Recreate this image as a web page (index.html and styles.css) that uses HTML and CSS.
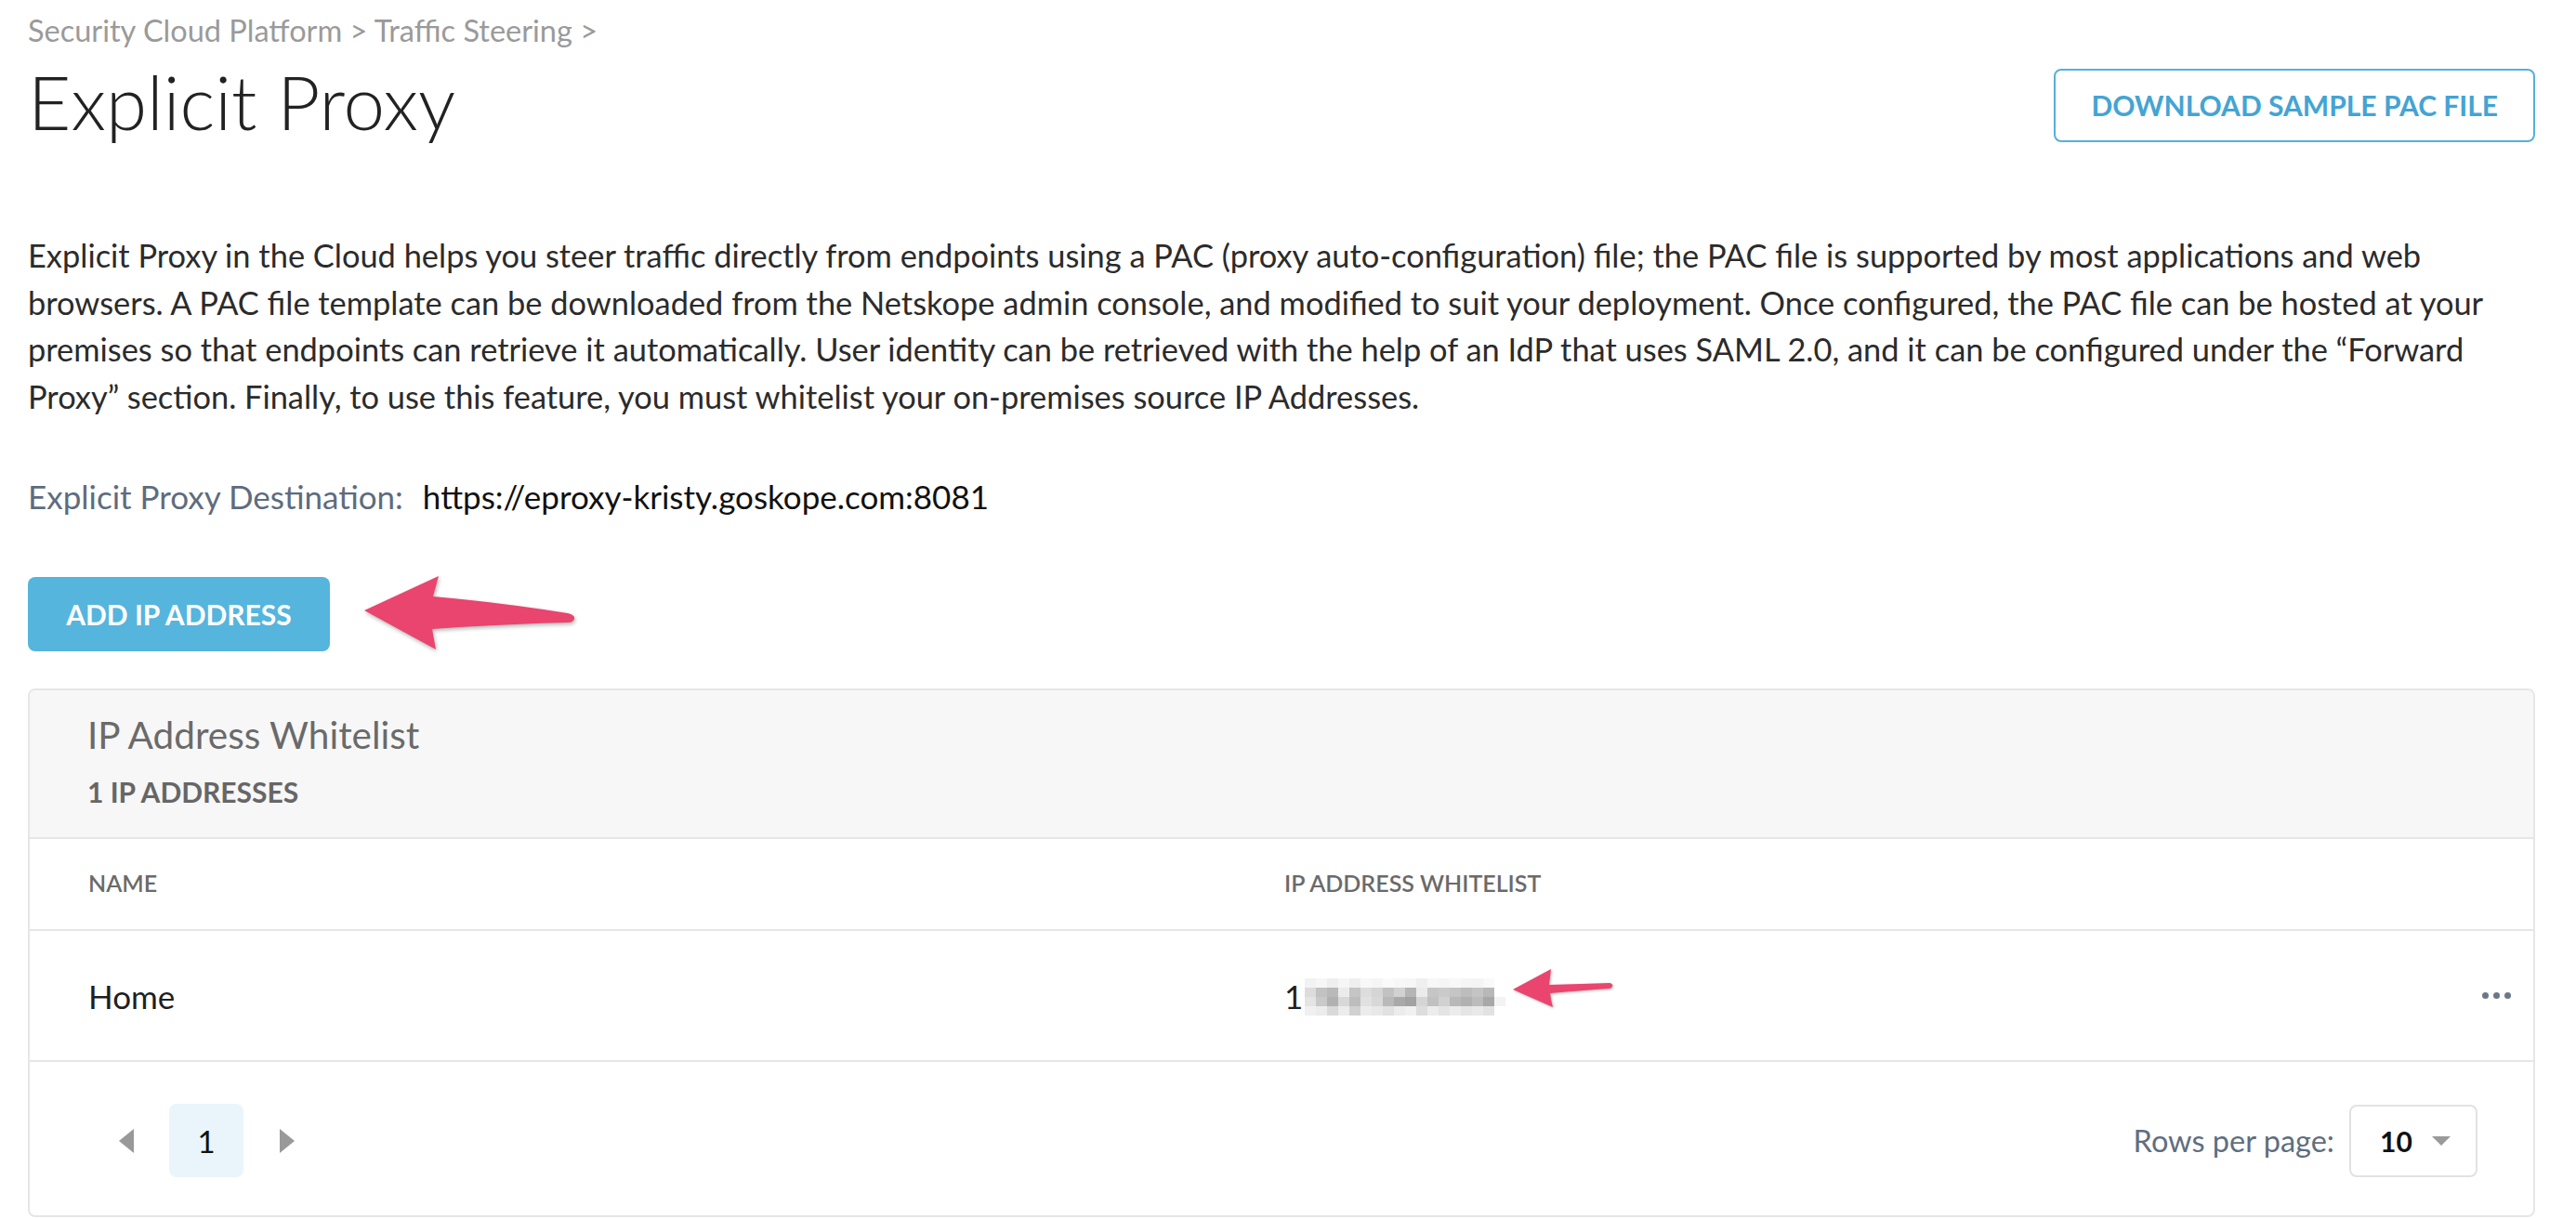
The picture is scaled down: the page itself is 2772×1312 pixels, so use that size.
FILE: index.html
```html
<!DOCTYPE html>
<html lang="en">
<head>
<meta charset="utf-8">
<title>Explicit Proxy</title>
<link rel="stylesheet" href="styles.css">
</head>
<body>
<div class="page">
  <div class="crumbs">Security Cloud Platform &gt; Traffic Steering &gt;</div>
  <div class="title-row">
    <h1>Explicit Proxy</h1>
    <button class="btn-outline">DOWNLOAD SAMPLE PAC FILE</button>
  </div>

  <p class="intro">Explicit Proxy in the Cloud helps you steer traffic directly from endpoints using a PAC (proxy auto-configuration) file; the PAC file is supported by most applications and web browsers. A PAC file template can be downloaded from the Netskope admin console, and modified to suit your deployment. Once configured, the PAC file can be hosted at your premises so that endpoints can retrieve it automatically. User identity can be retrieved with the help of an IdP that uses SAML 2.0, and it can be configured under the “Forward Proxy” section. Finally, to use this feature, you must whitelist your on-premises source IP Addresses.</p>

  <div class="dest">
    <span class="dest-label">Explicit Proxy Destination:</span>
    <span class="dest-value">https://eproxy-kristy.goskope.com:8081</span>
  </div>

  <div class="actions">
    <button class="btn-primary">ADD IP ADDRESS</button>
    <svg class="arrow-big" width="240" height="90" viewBox="0 0 240 90">
      <path d="M7 42 L87 5 Q84 16 81 27 Q150 33 226 45 Q234 47 233 51 Q232 55 226 55 Q150 57 80 62 Q82 73 84 84 Z" fill="#e9456e"/>
    </svg>
  </div>

  <div class="card">
    <div class="card-head">
      <div class="card-title">IP Address Whitelist</div>
      <div class="card-count">1 IP ADDRESSES</div>
    </div>

    <div class="row row-head">
      <div class="cell">NAME</div>
      <div class="cell">IP ADDRESS WHITELIST</div>
      <div class="cell"></div>
    </div>

    <div class="row row-data">
      <div class="cell">Home</div>
      <div class="cell ip">
        <span>1</span>
        <svg class="blur" width="216" height="40" viewBox="0 0 216 40">
          <g>
            <rect x="0" y="0" width="12" height="10" fill="#f2f2f2"/><rect x="12" y="0" width="12" height="10" fill="#f6f6f6"/><rect x="24" y="0" width="12" height="10" fill="#eeeeee"/><rect x="36" y="0" width="12" height="10" fill="#f6f6f6"/><rect x="48" y="0" width="12" height="10" fill="#efefef"/><rect x="60" y="0" width="12" height="10" fill="#f8f8f8"/><rect x="72" y="0" width="12" height="10" fill="#f5f5f5"/><rect x="84" y="0" width="12" height="10" fill="#fafafa"/><rect x="96" y="0" width="12" height="10" fill="#f7f7f7"/><rect x="108" y="0" width="12" height="10" fill="#f6f6f6"/><rect x="120" y="0" width="12" height="10" fill="#efefef"/><rect x="132" y="0" width="12" height="10" fill="#f7f7f7"/><rect x="144" y="0" width="12" height="10" fill="#f5f5f5"/><rect x="156" y="0" width="12" height="10" fill="#f8f8f8"/><rect x="168" y="0" width="12" height="10" fill="#f5f5f5"/><rect x="180" y="0" width="12" height="10" fill="#f4f4f4"/><rect x="192" y="0" width="12" height="10" fill="#f9f9f9"/>
            <rect x="0" y="10" width="12" height="10" fill="#dcdcdc"/><rect x="12" y="10" width="12" height="10" fill="#c2c2c2"/><rect x="24" y="10" width="12" height="10" fill="#b9b9b9"/><rect x="36" y="10" width="12" height="10" fill="#ebebeb"/><rect x="48" y="10" width="12" height="10" fill="#c5c5c5"/><rect x="60" y="10" width="12" height="10" fill="#dddddd"/><rect x="72" y="10" width="12" height="10" fill="#d5d5d5"/><rect x="84" y="10" width="12" height="10" fill="#c2c2c2"/><rect x="96" y="10" width="12" height="10" fill="#d2d2d2"/><rect x="108" y="10" width="12" height="10" fill="#b5b5b5"/><rect x="120" y="10" width="12" height="10" fill="#ebebeb"/><rect x="132" y="10" width="12" height="10" fill="#c6c6c6"/><rect x="144" y="10" width="12" height="10" fill="#cacaca"/><rect x="156" y="10" width="12" height="10" fill="#c5c5c5"/><rect x="168" y="10" width="12" height="10" fill="#bdbdbd"/><rect x="180" y="10" width="12" height="10" fill="#c4c4c4"/><rect x="192" y="10" width="12" height="10" fill="#b8b8b8"/>
            <rect x="0" y="20" width="12" height="10" fill="#e4e4e4"/><rect x="12" y="20" width="12" height="10" fill="#c9c9c9"/><rect x="24" y="20" width="12" height="10" fill="#b1b1b1"/><rect x="36" y="20" width="12" height="10" fill="#d8d8d8"/><rect x="48" y="20" width="12" height="10" fill="#bdbdbd"/><rect x="60" y="20" width="12" height="10" fill="#e1e1e1"/><rect x="72" y="20" width="12" height="10" fill="#d8d8d8"/><rect x="84" y="20" width="12" height="10" fill="#b9b9b9"/><rect x="96" y="20" width="12" height="10" fill="#a9a9a9"/><rect x="108" y="20" width="12" height="10" fill="#a2a2a2"/><rect x="120" y="20" width="12" height="10" fill="#d5d5d5"/><rect x="132" y="20" width="12" height="10" fill="#c1c1c1"/><rect x="144" y="20" width="12" height="10" fill="#d1d1d1"/><rect x="156" y="20" width="12" height="10" fill="#b9b9b9"/><rect x="168" y="20" width="12" height="10" fill="#b1b1b1"/><rect x="180" y="20" width="12" height="10" fill="#bcbcbc"/><rect x="192" y="20" width="12" height="10" fill="#a8a8a8"/><rect x="204" y="20" width="12" height="10" fill="#f3f3f3"/>
            <rect x="0" y="30" width="12" height="10" fill="#f0f0f0"/><rect x="12" y="30" width="12" height="10" fill="#ececec"/><rect x="24" y="30" width="12" height="10" fill="#d9d9d9"/><rect x="36" y="30" width="12" height="10" fill="#ececec"/><rect x="48" y="30" width="12" height="10" fill="#d1d1d1"/><rect x="60" y="30" width="12" height="10" fill="#ececec"/><rect x="72" y="30" width="12" height="10" fill="#e8e8e8"/><rect x="84" y="30" width="12" height="10" fill="#e1e1e1"/><rect x="96" y="30" width="12" height="10" fill="#ececec"/><rect x="108" y="30" width="12" height="10" fill="#f1f1f1"/><rect x="120" y="30" width="12" height="10" fill="#dddddd"/><rect x="132" y="30" width="12" height="10" fill="#ececec"/><rect x="144" y="30" width="12" height="10" fill="#e4e4e4"/><rect x="156" y="30" width="12" height="10" fill="#ececec"/><rect x="168" y="30" width="12" height="10" fill="#e5e5e5"/><rect x="180" y="30" width="12" height="10" fill="#e9e9e9"/><rect x="192" y="30" width="12" height="10" fill="#e2e2e2"/>
          </g>
        </svg>
      </div>
      <div class="cell more"><span class="dot"></span><span class="dot"></span><span class="dot"></span></div>
      <svg class="arrow-small" width="116" height="50" viewBox="0 0 116 50">
        <path d="M6 26 L47 4 Q46 12 45 21 Q80 20 110 19 Q114 20 113 22.5 Q112 25 109 25 Q80 27 46 30 Q47 38 49 45 Z" fill="#e9456e"/>
      </svg>
    </div>

    <div class="pager">
      <div class="pages">
        <span class="tri tri-left"></span>
        <span class="page-num">1</span>
        <span class="tri tri-right"></span>
      </div>
      <div class="rows">
        <span class="rows-label">Rows per page:</span>
        <div class="select"><span class="select-val">10</span><span class="caret"></span></div>
      </div>
    </div>
  </div>
</div>
</body>
</html>
```
FILE: styles.css
```css
* { box-sizing: border-box; }

html, body {
  margin: 0;
  background: #ffffff;
}

body {
  font-family: Lato, "Open Sans", "Liberation Sans", sans-serif;
  color: #2b2b2b;
}

.page {
  padding: 15px 44px 0 30px;
}

.crumbs {
  font-size: 32.5px;
  line-height: 36px;
  color: #9a9a9a;
}

.title-row {
  display: flex;
  justify-content: space-between;
  align-items: center;
  margin-top: 10px;
}

h1 {
  margin: 0;
  font-weight: 300;
  font-size: 80px;
  line-height: 96px;
  color: #222222;
}

.btn-outline {
  height: 79px;
  padding: 0 38px;
  border: 2px solid #55b0dc;
  border-radius: 8px;
  background: #ffffff;
  color: #44a4d3;
  font-family: Lato, sans-serif;
  font-weight: 700;
  font-size: 30px;
  margin-top: 8px;
}

.intro {
  margin: 93px 0 0;
  font-size: 34.4px;
  line-height: 50.5px;
  color: #2b2b2b;
}

.dest {
  margin-top: 57px;
  font-size: 35px;
  line-height: 50px;
  display: flex;
  gap: 21px;
}

.dest-label { color: #5e6c7e; }
.dest-value { color: #111111; }

.actions {
  position: relative;
  margin-top: 62px;
  height: 80px;
}

.btn-primary {
  height: 80px;
  width: 325px;
  border: 0;
  border-radius: 8px;
  background: #55b5dd;
  color: #ffffff;
  font-family: Lato, sans-serif;
  font-weight: 700;
  font-size: 30px;
}

.arrow-big {
  position: absolute;
  left: 355px;
  top: -6px;
  filter: drop-shadow(1px 2px 2px rgba(0, 0, 0, 0.3));
}

.card {
  margin-top: 40px;
  border: 2px solid #e6e6e6;
  border-radius: 8px;
  overflow: hidden;
}

.card-head {
  background: #f7f7f7;
  padding: 24px 62px 32px;
  border-bottom: 2px solid #e6e6e6;
}

.card-title {
  font-size: 40.5px;
  line-height: 48px;
  color: #6a6a6a;
}

.card-count {
  margin-top: 20px;
  font-size: 30px;
  line-height: 34px;
  font-weight: 700;
  color: #666666;
}

.row {
  position: relative;
  display: grid;
  grid-template-columns: 1287px 1fr 60px;
  align-items: center;
  padding: 0 24px 0 63px;
  border-bottom: 2px solid #e6e6e6;
}

.row-head {
  height: 99px;
  padding-bottom: 4px;
  font-size: 25px;
  font-weight: 600;
  color: #6a6a6a;
}

.row-data {
  height: 141px;
  font-size: 35px;
  color: #1f1f1f;
}

.ip {
  display: flex;
  align-items: center;
}

.blur {
  display: block;
  margin-left: 2px;
  margin-top: 2px;
}

.more {
  display: flex;
  justify-content: flex-end;
  gap: 5px;
}

.dot {
  width: 7px;
  height: 7px;
  border-radius: 50%;
  background: #6b7888;
}

.arrow-small {
  position: absolute;
  left: 1590px;
  top: 37px;
  filter: drop-shadow(1px 1px 1.5px rgba(0, 0, 0, 0.3));
}

.pager {
  height: 165px;
  display: flex;
  justify-content: space-between;
  align-items: center;
  padding: 4px 60px 0 96px;
}

.pages {
  display: flex;
  align-items: center;
}

.tri {
  width: 0;
  height: 0;
  border-top: 13px solid transparent;
  border-bottom: 13px solid transparent;
}

.tri-left { border-right: 16px solid #999999; }
.tri-right { border-left: 16px solid #999999; }

.page-num {
  width: 80px;
  height: 79px;
  margin: 0 39px 0 38px;
  border-radius: 8px;
  background: #eaf5fb;
  display: flex;
  align-items: center;
  justify-content: center;
  font-size: 33px;
  color: #111111;
}

.rows {
  display: flex;
  align-items: center;
  gap: 16px;
}

.rows-label {
  font-size: 32.5px;
  color: #5f6e80;
}

.select {
  width: 138px;
  height: 78px;
  border: 2px solid #e2e2e2;
  border-radius: 8px;
  display: flex;
  align-items: center;
  padding: 0 27px 0 31px;
  justify-content: space-between;
}

.select-val {
  font-size: 30px;
  font-weight: 700;
  color: #111111;
}

.caret {
  width: 0;
  height: 0;
  border-left: 10px solid transparent;
  border-right: 10px solid transparent;
  border-top: 10px solid #9a9a9a;
}
```
